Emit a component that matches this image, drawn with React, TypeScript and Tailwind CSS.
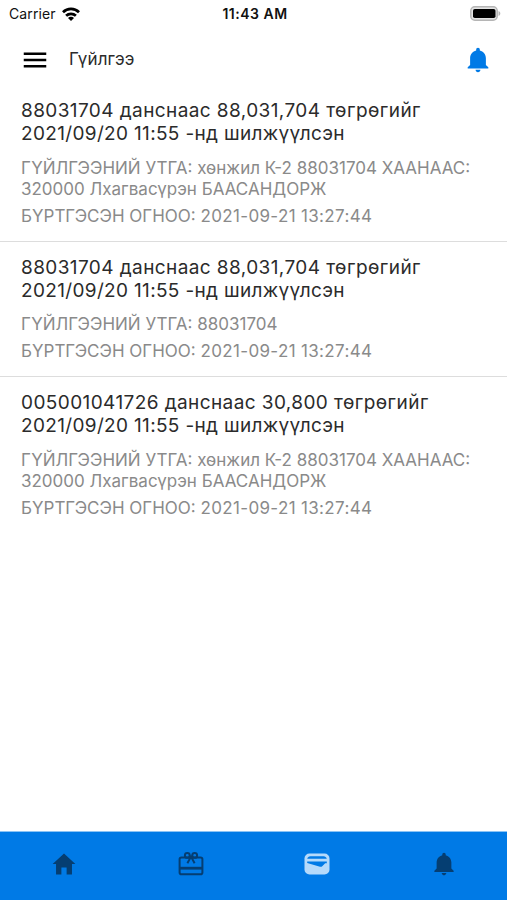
import { IoMdHome, IoMdNotifications } from 'react-icons/io';
import { MdMenu } from 'react-icons/md';

type Transaction = {
  title: string[];
  note: string[];
  date: string;
};

const transactions: Transaction[] = [
  {
    title: ['88031704 данснаас 88,031,704 төгрөгийг', '2021/09/20 11:55 -нд шилжүүлсэн'],
    note: ['ГҮЙЛГЭЭНИЙ УТГА: хөнжил К-2 88031704 ХААНААС:', '320000 Лхагвасүрэн БААСАНДОРЖ'],
    date: '2021-09-21 13:27:44',
  },
  {
    title: ['88031704 данснаас 88,031,704 төгрөгийг', '2021/09/20 11:55 -нд шилжүүлсэн'],
    note: ['ГҮЙЛГЭЭНИЙ УТГА: 88031704'],
    date: '2021-09-21 13:27:44',
  },
  {
    title: ['005001041726 данснаас 30,800 төгрөгийг', '2021/09/20 11:55 -нд шилжүүлсэн'],
    note: ['ГҮЙЛГЭЭНИЙ УТГА: хөнжил К-2 88031704 ХААНААС:', '320000 Лхагвасүрэн БААСАНДОРЖ'],
    date: '2021-09-21 13:27:44',
  },
];

function WifiIcon() {
  return (
    <svg width="18" height="14" viewBox="0 0 18 14" fill="none" stroke="#000" strokeWidth="2.7">
      <path d="M1 5.2a11.3 11.3 0 0 1 16 0" />
      <path d="M4.1 8.8a7 7 0 0 1 9.8 0" />
      <path d="M9 14 6 10.9a4.2 4.2 0 0 1 6 0z" fill="#000" stroke="none" />
    </svg>
  );
}

function BatteryIcon() {
  return (
    <svg width="31" height="15" viewBox="0 0 31 15">
      <rect x="0.8" y="0.8" width="26.4" height="13.4" rx="4" fill="#e4e4e4" stroke="#b5b5b5" strokeWidth="1.5" />
      <rect x="3" y="3" width="22.5" height="9" rx="1.8" fill="#000" />
      <path d="M28.5 5c2.4.7 2.4 4.3 0 5z" fill="#b5b5b5" />
    </svg>
  );
}

function GiftCardIcon() {
  return (
    <svg width="26" height="26" viewBox="0 0 26 26" fill="none" stroke="currentColor" strokeWidth="2">
      <rect x="1.6" y="6.4" width="22.8" height="16.8" rx="1.8" />
      <path d="M2 17.2h22" strokeWidth="2.8" />
      <circle cx="9.3" cy="4.4" r="2.4" />
      <circle cx="16.7" cy="4.4" r="2.4" />
      <path d="M9.4 12.3 13 5.6l3.6 6.7" />
    </svg>
  );
}

function CardIcon() {
  return (
    <svg width="26" height="22" viewBox="0 0 26 22">
      <rect x="0.5" y="0.5" width="25" height="21" rx="5" fill="#b5dafb" />
      <path d="M3.2 5.8C3.6 4 4.8 3.2 6.4 3.2h13.2c1.6 0 2.8.8 3.2 2.6z" fill="#007ae6" />
      <path d="M3.2 8.4h19.6v1.8h-1.6l-3 3.1c-.6.6-1.4.7-2.2.4L3.2 10z" fill="#007ae6" />
    </svg>
  );
}

export default function App() {
  return (
    <div className="flex h-[900px] w-[507px] flex-col bg-white font-['Inter',sans-serif] text-[#2b2b2b]">
      <div className="grid h-[27px] grid-cols-3 items-center pr-[6px] pl-[9px] text-[14px] text-[#111]">
        <div className="flex items-center gap-[6px] tracking-[0.1px]">
          <span>Carrier</span>
          <WifiIcon />
        </div>
        <span className="text-center font-semibold tracking-[0.5px]">11:43 AM</span>
        <div className="flex justify-end">
          <BatteryIcon />
        </div>
      </div>

      <header className="flex h-[65px] items-center pr-[14px] pl-5">
        <MdMenu size={30} className="text-black" />
        <h1 className="ml-[19px] text-[17px] tracking-[0.1px]">Гүйлгээ</h1>
        <IoMdNotifications size={30} className="ml-auto text-[#007ae6]" />
      </header>

      <main className="flex-1">
        {transactions.map((item, i) => (
          <div key={i} className="border-b border-[#ddd] px-[21px] pt-[14px] pb-[14px] first:pt-[7px] last:border-0">
            <div className="text-[19px] leading-[23px] tracking-[0.41px] whitespace-nowrap">
              {item.title.map((line, n) => (
                <p key={line} className={n > 0 ? 'tracking-[0.34px]' : undefined}>
                  {line}
                </p>
              ))}
            </div>
            <div className="mt-[12.5px] text-[17px] leading-[21px] whitespace-nowrap text-[#8a8a8a]">
              {item.note.map((line) => (
                <p key={line}>{line}</p>
              ))}
              <p className="mt-1.5">
                БҮРТГЭСЭН ОГНОО: <span className="tracking-[0.34px]">{item.date}</span>
              </p>
            </div>
          </div>
        ))}
      </main>

      <nav className="grid h-[69px] grid-cols-4 items-center justify-items-center border-t border-[#8cc4f5] bg-[#007ae6] pb-1 pl-px text-[#053e72]">
        <IoMdHome size={28} />
        <GiftCardIcon />
        <CardIcon />
        <IoMdNotifications size={28} />
      </nav>
    </div>
  );
}
